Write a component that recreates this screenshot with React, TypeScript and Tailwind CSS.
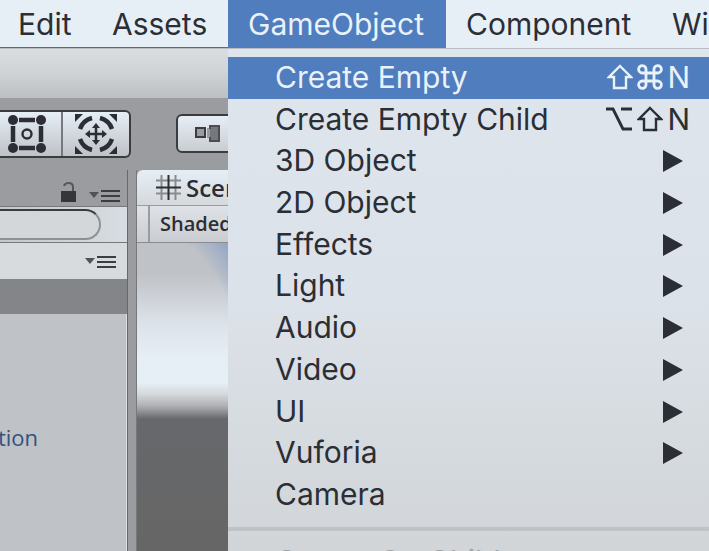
import React from "react";

const submenus = ["3D Object", "2D Object", "Effects", "Light", "Audio", "Video", "UI", "Vuforia"];

function ShiftKey() {
  return (
    <svg width="26" height="26" viewBox="0 0 26 26" fill="none" stroke="currentColor" strokeWidth="2.4" aria-hidden="true">
      <path d="M13 2 L24 13 H19 V24 H7 V13 H2 Z" strokeLinejoin="miter" />
    </svg>
  );
}

function CommandKey() {
  return (
    <svg width="26" height="26" viewBox="0 0 26 26" fill="none" stroke="currentColor" strokeWidth="2.8" aria-hidden="true">
      <path d="M9 9 V5.500 A3.700 3.700 0 1 0 5.300 9 H20.700 A3.700 3.700 0 1 0 17 5.500 V20.500 A3.700 3.700 0 1 0 20.700 17 H5.300 A3.700 3.700 0 1 0 9 20.500 Z" />
    </svg>
  );
}

function OptionKey() {
  return (
    <svg width="28" height="26" viewBox="0 0 28 26" fill="none" stroke="currentColor" strokeWidth="2.800" aria-hidden="true">
      <path d="M1 3 H8 L18 23 H27 M16 3 H27" />
    </svg>
  );
}

function RectToolIcon() {
  return (
    <svg width="38" height="38" viewBox="0 0 38 38" fill="#2b2e34" stroke="#2b2e34" aria-hidden="true">
      <path d="M11 5 H27 M11 33 H27 M5 11 V27 M33 11 V27" fill="none" strokeWidth="4.500" />
      <g stroke="none">
        <circle cx="5" cy="5" r="5" />
        <circle cx="33" cy="5" r="5" />
        <circle cx="5" cy="33" r="5" />
        <circle cx="33" cy="33" r="5" />
      </g>
      <circle cx="19" cy="19" r="4.500" fill="none" strokeWidth="2.400" />
    </svg>
  );
}

function TransformToolIcon() {
  return (
    <svg width="42" height="40" viewBox="0 0 42 40" fill="#2b2e34" stroke="#2b2e34" aria-hidden="true">
      <g fill="none" strokeWidth="4.500">
        <path d="M5 15 A17 17 0 0 1 17 4 M25 4 A17 17 0 0 1 37 15 M37 25 A17 17 0 0 1 25 36 M17 36 A17 17 0 0 1 5 25" />
        <path d="M21 13 V27 M14 20 H28" strokeWidth="2.500" />
      </g>
      <g stroke="none">
        <path d="M0 0 H8 L0 8 Z M34 0 H42 V8 Z M0 32 L8 40 H0 Z M42 32 V40 H34 Z" />
        <path d="M21 9 L25 14 H17 Z M21 31 L25 26 H17 Z M10 20 L15 16 V24 Z M32 20 L27 16 V24 Z" />
      </g>
    </svg>
  );
}

function PivotIcon() {
  return (
    <svg width="25" height="17" viewBox="0 0 25 17" aria-hidden="true">
      <rect x="1" y="3" width="9" height="9" fill="#9b9ca0" stroke="#3a3c40" strokeWidth="2" />
      <path d="M12 3 H18 V13 H12 Z" fill="#9b9ca0" />
      <path d="M15 4 V1 H24 V16 H15 V12" fill="#77787b" stroke="#4c4e52" strokeWidth="2" />
    </svg>
  );
}

function LockIcon() {
  return (
    <svg width="17" height="20" viewBox="0 0 17 20" aria-hidden="true">
      <rect x="1" y="9" width="15" height="11" fill="#34363b" />
      <path d="M4 4 Q5 1 8.500 1 Q13 1 13 5 V9" fill="none" stroke="#55575b" strokeWidth="2" />
    </svg>
  );
}

function OptionsIcon() {
  return (
    <svg width="31" height="13" viewBox="0 0 31 13" aria-hidden="true">
      <path d="M0 3 H10 L5 9 Z" fill="#505256" />
      <path d="M12 2 H31 M12 7 H31 M12 12 H31" stroke="#3b3d42" strokeWidth="2" />
    </svg>
  );
}

function GridIcon() {
  return (
    <svg width="25" height="25" viewBox="0 0 25 25" fill="none" aria-hidden="true">
      <path d="M5.500 0 V25 M19.500 0 V25 M0 5.500 H25 M0 18.500 H25" stroke="#8b8c90" strokeWidth="2" />
      <path d="M12.500 0 V25 M0 12.500 H25" stroke="#2b2e34" strokeWidth="2" />
    </svg>
  );
}

function SubmenuArrow() {
  return (
    <svg width="20" height="22" viewBox="0 0 20 22" aria-hidden="true">
      <path d="M0 0 L20 11 L0 22 Z" fill="#2b2e34" />
    </svg>
  );
}

function MenuBar() {
  return (
    <nav className="flex h-[49px] shrink-0 border-b border-[#b9bcc0] bg-[#e6eef6] text-[30px] leading-[48px] whitespace-nowrap">
      <div className="flex w-[228px] shrink-0 border-b border-[#66686b] pl-[18px]">
        <button className="w-[94px] text-left">Edit</button>
        <button>Assets</button>
      </div>
      <div className="relative w-[218px] shrink-0 bg-[#4f7dbd] text-[#e9f1f9]">
        <button className="block h-[48px] w-full pl-5 text-left" aria-expanded="true">GameObject</button>
        <GameObjectMenu />
      </div>
      <button className="w-[226px] shrink-0 pl-5 text-left">Component</button>
      <button className="shrink-0">Window</button>
    </nav>
  );
}

function GameObjectMenu() {
  const row = "flex w-full items-center justify-between pr-[19px] pl-[47px] text-left";
  return (
    <div
      role="menu"
      className="absolute top-[49px] left-0 z-10 h-[calc(100vh-49px)] w-[calc(100vw-228px)] overflow-hidden bg-linear-to-b from-[#dee5ed] via-[#dce2e9] to-[#d1d5d8] pt-2 text-[30px] leading-9 text-[#2b2e34]"
    >
      <div className="grid h-[459px] auto-rows-fr">
        <button role="menuitem" className={`${row} bg-[#4f7dbd] text-[#e9f1f9]`}>
          <span className="pb-0.5">Create Empty</span>
          <span className="flex items-center gap-1 pb-0.5">
            <ShiftKey />
            <CommandKey />
            <span>N</span>
          </span>
        </button>
        <button role="menuitem" className={row}>
          <span className="pb-0.5">Create Empty Child</span>
          <span className="flex items-center gap-1 pb-0.5">
            <OptionKey />
            <ShiftKey />
            <span>N</span>
          </span>
        </button>
        {submenus.map((name) => (
          <button key={name} role="menuitem" aria-haspopup="menu" className="flex w-full items-center justify-between pr-[26px] pl-[47px] text-left">
            <span className="pb-0.5">{name}</span>
            <SubmenuArrow />
          </button>
        ))}
        <button role="menuitem" className={row}>
          <span className="pb-0.5">Camera</span>
        </button>
      </div>
      <hr className="mt-[11px] h-1 border-0 bg-[#bfc2c7]" />
      <button role="menuitem" disabled className="mt-3 block pl-[47px] text-[#a0a3a7]">Center On Children</button>
    </div>
  );
}

function Hierarchy() {
  return (
    <section className="flex w-32 shrink-0 flex-col border-r border-[#66686b]">
      <div className="flex h-[36px] items-end justify-end gap-3 pr-[7px] pb-1">
        <LockIcon />
        <OptionsIcon />
      </div>
      <div className="flex h-[37px] items-center border-y border-[#77787b] bg-linear-to-r from-[#c4c8cc] to-[#d8dde3]">
        <input
          aria-label="Search hierarchy"
          className="h-[31px] w-[101px] rounded-r-full border-2 border-l-0 border-[#8e9094] border-t-[#3a3c40] bg-[#d3d7d9] outline-none"
        />
      </div>
      <div className="flex h-[36px] items-center justify-end bg-[#d7dbdd] pr-[11px]">
        <OptionsIcon />
      </div>
      <div className="h-[35px] bg-[#848588]" />
      <div className="flex-1 border-r border-[#dde0e3] bg-[#bfc2c7] pt-[108px] text-[22px] leading-[30px] font-medium text-[#34527f]">
        <div className="flex w-[38px] justify-end overflow-hidden">
          <span>tion</span>
        </div>
      </div>
    </section>
  );
}

function SceneView() {
  return (
    <section className="ml-2 flex min-w-0 flex-1 flex-col border-l border-[#77787b] text-[#2b2e34]">
      <div className="flex h-[36px] items-center gap-[5px] rounded-tl-md border-b border-[#9b9ca0] bg-linear-to-b from-[#e6eef6] to-[#d5d9dc] pl-[19px] text-[24px] font-semibold">
        <GridIcon />
        <span>Scene</span>
      </div>
      <div className="flex h-[37px] items-stretch border-b border-[#8b8c90] bg-linear-to-b from-[#dfe3e7] to-[#c9ccd0]">
        <div className="w-[13px] border-r-2 border-[#9b9ca0]" />
        <button className="pl-2.5 text-[20px] font-semibold">Shaded</button>
      </div>
      <div className="flex-1 bg-[linear-gradient(to_bottom,#bfc2c7_0px,#bfc2c7_30px,#dce2e9_80px,#e6eef6_115px,#e6eef6_140px,#d5d9dc_151px,#aeb0b4_163px,#66686b_176px,#666_100%)]">
        <div className="h-[130px] w-[91px] bg-[radial-gradient(ellipse_at_0%_100%,transparent_80%,#91a5c6_100%)]" />
      </div>
    </section>
  );
}

export default function App() {
  return (
    <main className="flex h-screen flex-col overflow-hidden bg-[#9b9ca0] font-[Inter,'Liberation_Sans',sans-serif] text-[#2b2e34]">
      <MenuBar />
      <div className="h-[49px] w-[228px] shrink-0 bg-linear-to-b from-[#d9dddf] via-[#d0d3d5] to-[#bcbfc3]" />
      <div className="flex h-[72px] shrink-0 items-start pt-3">
        <div className="flex h-[48px] w-[131px] rounded-r-md border-2 border-l-0 border-[#3a3c40] bg-linear-to-b from-[#e6eef6] to-[#bfc2c7]">
          <button aria-label="Rect tool" className="flex w-[63px] items-center justify-center border-r-2 border-[#77787b] pr-2">
            <RectToolIcon />
          </button>
          <button aria-label="Transform tool" className="flex flex-1 items-center justify-center">
            <TransformToolIcon />
          </button>
        </div>
        <button aria-label="Pivot mode" className="mt-1 ml-[45px] flex h-[39px] w-[90px] items-center rounded-md border-2 border-[#3a3c40] bg-linear-to-b from-[#e6eef6] to-[#c9cdd1] pl-[17px]">
          <PivotIcon />
        </button>
      </div>
      <div className="flex min-h-0 flex-1 font-['Open_Sans','Noto_Sans',sans-serif]">
        <Hierarchy />
        <SceneView />
      </div>
    </main>
  );
}
